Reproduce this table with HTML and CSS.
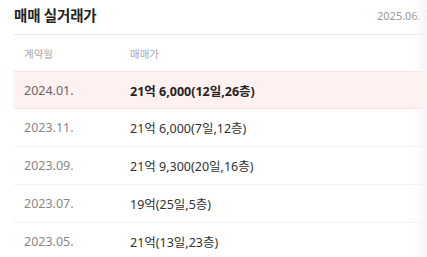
FILE: index.html
```html
<!DOCTYPE html>
<html lang="ko">
<head>
<meta charset="utf-8">
<link rel="stylesheet" href="styles.css">
</head>
<body>
<section class="panel">
  <div class="head">
    <h2 class="title">매매 실거래가</h2>
    <span class="date">2025.06. 기준</span>
  </div>
  <div class="table">
    <div class="row th">
      <span class="c1">계약월</span>
      <span class="c2">매매가</span>
    </div>
    <div class="row hl">
      <span class="c1">2024.01.</span>
      <span class="c2 strong">21억 6,000(12일,26층)</span>
    </div>
    <div class="row">
      <span class="c1">2023.11.</span>
      <span class="c2">21억 6,000(7일,12층)</span>
    </div>
    <div class="row">
      <span class="c1">2023.09.</span>
      <span class="c2">21억 9,300(20일,16층)</span>
    </div>
    <div class="row">
      <span class="c1">2023.07.</span>
      <span class="c2">19억(25일,5층)</span>
    </div>
    <div class="row">
      <span class="c1">2023.05.</span>
      <span class="c2">21억(13일,23층)</span>
    </div>
  </div>
  <div class="fade"></div>
</section>
</body>
</html>
```
FILE: styles.css
```css
* { box-sizing: border-box; }
html, body { margin: 0; padding: 0; background: #fff; }
body {
  font-family: "Noto Sans", "Noto Sans CJK KR", sans-serif;
  width: 427px;
  height: 257px;
  overflow: hidden;
}
.panel {
  position: relative;
  padding-left: 14px;
  width: 427px;
  height: 257px;
  overflow: hidden;
}
.head {
  display: flex;
  align-items: center;
  justify-content: space-between;
  height: 35px;
  padding-bottom: 5px;
  border-bottom: 1px solid #e8e8e8;
  width: 440px;
}
.title {
  margin: 0;
  font-size: 14.5px;
  font-weight: 700;
  color: #222;
  letter-spacing: -0.2px;
}
.date {
  font-size: 11px;
  color: #999;
  margin-right: 14px;
  white-space: nowrap;
  width: 63px;
  overflow: hidden;
}
.table { width: 440px; }
.row {
  display: flex;
  align-items: center;
  height: 38px;
  border-bottom: 1px solid #f1f1f1;
  font-size: 12.5px;
  color: #333;
}
.row .c1 {
  width: 116px;
  padding-left: 10px;
  color: #888;
}
.row .c2 { white-space: nowrap; }
.th {
  height: 36px;
  border-bottom: none;
  font-size: 10.5px;
}
.th .c1, .th .c2 { color: #aaa; }
.hl {
  background: #fff1f1;
  border-top: 1px solid #fde0e0;
  border-bottom: 1px solid #fde0e0;
}
.hl .c1 { color: #666; }
.strong { font-weight: 700; color: #222; }
.fade {
  position: absolute;
  top: 0;
  right: 0;
  width: 14px;
  height: 100%;
  background: linear-gradient(to right, rgba(255,255,255,0), rgba(245,245,245,0.95));
}
```
